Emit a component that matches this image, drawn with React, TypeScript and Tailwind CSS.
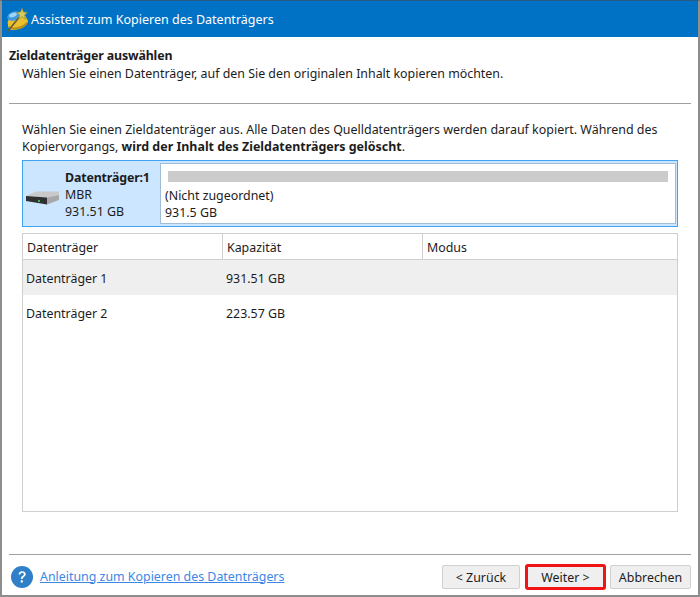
import { } from 'react'

const font = { fontFamily: '"Noto Sans", sans-serif' }

function WizardIcon() {
  return (
    <svg width="24" height="26" viewBox="0 0 24 26" className="shrink-0">
      <path d="M3 19 C2 14 4 13 8 12 L20 9 L23 15 C23 20 15 24 8 24 C5 24 3 22 3 19Z" fill="#e8c030" />
      <path d="M4 20 C7 23 16 22 22 16 L22 18 C18 23 8 25 4 22Z" fill="#b88a14" />
      <ellipse cx="9" cy="10" rx="7" ry="4.5" fill="#3f9be0" transform="rotate(-18 9 10)" />
      <ellipse cx="8" cy="9" rx="4" ry="2" fill="#9fd4f5" transform="rotate(-18 8 9)" />
      <path d="M3 25 L16 9" stroke="#6a5a30" strokeWidth="1.6" />
      <path d="M17 2 L18.5 6 L22.5 6.5 L19.5 9 L20.5 13 L17 10.8 L13.5 13 L14.5 9 L11.5 6.5 L15.5 6Z" fill="#d8c860" stroke="#7f8a30" strokeWidth="0.6" />
    </svg>
  )
}

function DiskIcon() {
  return (
    <svg width="33" height="14" viewBox="0 0 33 14" className="shrink-0 mt-[9px]">
      <path d="M0 5 L10 0.5 L33 0.5 L33 4 L21 6.5 Z" fill="#c9c9c9" />
      <path d="M0 5 L21 6.5 L21 13.5 L0 10 Z" fill="#303030" />
      <path d="M21 6.5 L33 4 L33 9 L21 13.5 Z" fill="#a8a8a8" />
      <rect x="12" y="9" width="2" height="2" fill="#35c04a" />
    </svg>
  )
}

function HelpIcon() {
  return (
    <svg width="22" height="22" viewBox="0 0 22 22" className="shrink-0">
      <circle cx="11" cy="11" r="11" fill="#2f80c8" />
      <path d="M7.6 8.4 C7.8 6.3 9.2 5.2 11.2 5.2 C13.3 5.2 14.7 6.4 14.7 8.1 C14.7 9.5 13.9 10.2 12.9 10.9 C12 11.5 11.6 12 11.6 13.1 L9.9 13.1 C9.9 11.6 10.4 10.8 11.4 10.1 C12.3 9.5 12.8 9 12.8 8.2 C12.8 7.3 12.2 6.8 11.2 6.8 C10.1 6.8 9.5 7.5 9.4 8.6 Z" fill="#ffffff" />
      <rect x="9.7" y="14.3" width="2.2" height="2.3" rx="0.4" fill="#ffffff" />
    </svg>
  )
}

const rows = [
  { name: 'Datenträger 1', size: '931.51 GB', active: true },
  { name: 'Datenträger 2', size: '223.57 GB', active: false },
]

export default function App() {
  return (
    <div style={font} className="w-[700px] h-[597px] flex flex-col overflow-hidden bg-white border-2 border-t-[1px] border-[#8e8e8e] border-t-[#2a5a85] text-[12.4px] leading-[17px] text-[#1c1c1c]">
      <div className="h-[36px] shrink-0 bg-[#0072c6] flex items-center gap-[2px] pl-[3px] text-white text-[12.5px]">
        <WizardIcon />
        <span>Assistent zum Kopieren des Datenträgers</span>
      </div>

      <div className="flex-1 flex flex-col px-[7px]">
        <div className="pt-[10px] h-[67px] border-b border-[#a0a0a0] shrink-0">
          <div className="font-bold tracking-[-0.15px]">Zieldatenträger auswählen</div>
          <div className="pl-[13px] pt-[1px]">Wählen Sie einen Datenträger, auf den Sie den originalen Inhalt kopieren möchten.</div>
        </div>

        <div className="pl-[13px] pr-[11px] flex flex-col flex-1">
          <p className="pt-[17px] w-[666px] text-[12.45px]">
            Wählen Sie einen Zieldatenträger aus. Alle Daten des Quelldatenträgers werden darauf kopiert. Während des Kopiervorgangs, <b>wird der Inhalt des Zieldatenträgers gelöscht</b>.
          </p>

          <div className="mt-[5px] h-[67px] w-[656px] border border-[#3fa4f5] bg-[#cce6ff] flex shrink-0">
            <div className="w-[137px] flex items-center shrink-0 pl-[3px] gap-[6px]">
              <DiskIcon />
              <div className="leading-[17px] pt-[2px]">
                <div className="font-bold tracking-[-0.15px]">Datenträger:1</div>
                <div>MBR</div>
                <div>931.51 GB</div>
              </div>
            </div>
            <div className="flex-1 my-[2px] mr-[1px] border border-[#a3bdd6] bg-white pl-[7px] pr-[7px] pt-[7px]">
              <div className="h-[11px] bg-[#cbcbcb] mb-[5px]" />
              <div className="-ml-[3px] leading-[17px]">(Nicht zugeordnet)</div>
              <div className="-ml-[3px] leading-[17px]">931.5 GB</div>
            </div>
          </div>

          <div className="mt-[6px] h-[279px] w-[656px] border border-[#cfcfcf] shrink-0">
            <div className="grid grid-cols-[200px_200px_1fr] h-[26px] border-b border-[#cfcfcf]">
              <div className="border-r border-[#cfcfcf] pl-[4px] pt-[1px] flex items-center">Datenträger</div>
              <div className="border-r border-[#cfcfcf] pl-[4px] pt-[1px] flex items-center">Kapazität</div>
              <div className="pl-[4px] pt-[1px] flex items-center">Modus</div>
            </div>
            {rows.map((r) => (
              <div key={r.name} className={`grid grid-cols-[200px_200px_1fr] h-[35px] items-center ${r.active ? 'bg-[#efefef]' : ''}`}>
                <div className="pl-[3px] pt-[1px]">{r.name}</div>
                <div className="pl-[3px] pt-[1px]">{r.size}</div>
                <div />
              </div>
            ))}
          </div>
        </div>

        <div className="border-t border-[#a0a0a0] h-[41px] shrink-0 flex items-start justify-between pt-[9px]">
          <div className="flex items-center gap-[7px] pl-[2px] pt-[2px]">
            <HelpIcon />
            <a className="text-[#3c87e6] underline -mt-[2px]">Anleitung zum Kopieren des Datenträgers</a>
          </div>
          <div className="flex items-center">
            <button className="w-[78px] h-[24px] rounded-[2px] bg-[#efefef] border border-[#d0d0d0] mr-[5px]">&lt; Zurück</button>
            <button className="w-[81px] h-[26px] rounded-[3px] bg-[#efefef] border-[3px] border-[#f01414] mr-[4px]">Weiter &gt;</button>
            <button className="w-[81px] h-[24px] rounded-[2px] bg-[#efefef] border border-[#d0d0d0]">Abbrechen</button>
          </div>
        </div>
      </div>
    </div>
  )
}
